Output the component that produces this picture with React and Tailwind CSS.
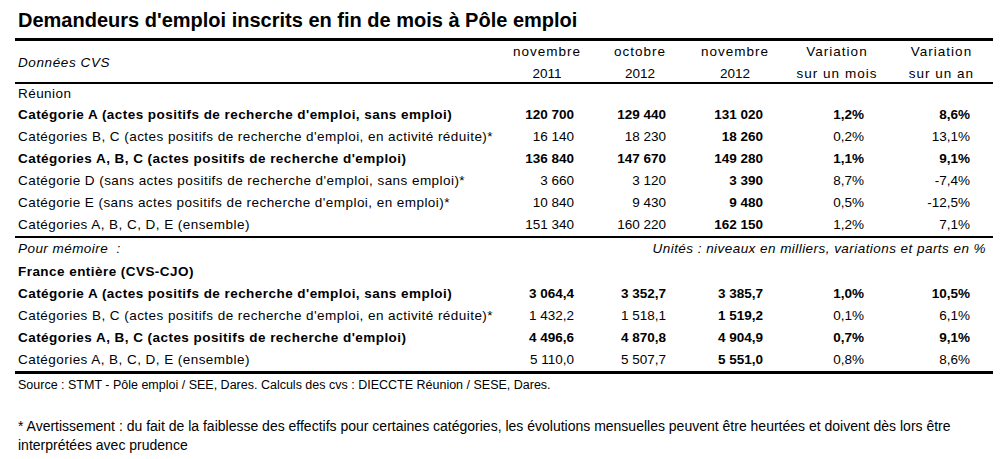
import React from "react";

const reunion = [
  { label: "Catégorie A (actes positifs de recherche d'emploi, sans emploi)", v: ["120 700", "129 440", "131 020", "1,2%", "8,6%"], bold: true },
  { label: "Catégories B, C (actes positifs de recherche d'emploi, en activité réduite)*", v: ["16 140", "18 230", "18 260", "0,2%", "13,1%"] },
  { label: "Catégories A, B, C (actes positifs de recherche d'emploi)", v: ["136 840", "147 670", "149 280", "1,1%", "9,1%"], bold: true },
  { label: "Catégorie D (sans actes positifs de recherche d'emploi, sans emploi)*", v: ["3 660", "3 120", "3 390", "8,7%", "-7,4%"] },
  { label: "Catégorie E (sans actes positifs de recherche d'emploi, en emploi)*", v: ["10 840", "9 430", "9 480", "0,5%", "-12,5%"] },
  { label: "Catégories A, B, C, D, E (ensemble)", v: ["151 340", "160 220", "162 150", "1,2%", "7,1%"] },
];

const france = [
  { label: "Catégorie A (actes positifs de recherche d'emploi, sans emploi)", v: ["3 064,4", "3 352,7", "3 385,7", "1,0%", "10,5%"], bold: true },
  { label: "Catégories B, C (actes positifs de recherche d'emploi, en activité réduite)*", v: ["1 432,2", "1 518,1", "1 519,2", "0,1%", "6,1%"] },
  { label: "Catégories A, B, C (actes positifs de recherche d'emploi)", v: ["4 496,6", "4 870,8", "4 904,9", "0,7%", "9,1%"], bold: true },
  { label: "Catégories A, B, C, D, E (ensemble)", v: ["5 110,0", "5 507,7", "5 551,0", "0,8%", "8,6%"] },
];

const grid = "grid grid-cols-[485px_94px_92px_98px_106px_103px]";
const pads = ["pr-[20px]", "pr-[20px]", "pr-[21px]", "pr-[26px]", "pr-[23px]"];

const Row = ({ row }) => (
  <div className={`${grid} h-[22px] items-center`}>
    <div className={`pl-[3px] whitespace-nowrap tracking-[0.45px] ${row.bold ? "font-bold" : ""}`}>{row.label}</div>
    {row.v.map((x, i) => (
      <div key={i} className={`text-right ${pads[i]} ${row.bold || i === 2 ? "font-bold" : ""}`}>
        {x}
      </div>
    ))}
  </div>
);

const Head = ({ top, bottom }) => (
  <div className="text-center leading-[22px]">
    <div className="tracking-[1px]">{top}</div>
    <div className={/\d/.test(bottom) ? "" : "tracking-[1px]"}>{bottom}</div>
  </div>
);

export default function App() {
  return (
    <div className="w-[1000px] h-[459px] bg-white text-black font-['Liberation_Sans',Arial,sans-serif] overflow-hidden">
      <div className="ml-[15px] w-[978px]">
        <div className="h-[38px] flex items-center pl-[3px] pt-[2px] text-[20px] font-bold">
          Demandeurs d'emploi inscrits en fin de mois à Pôle emploi
        </div>
        <div className="border-t-[3px] border-black" />
        <div className={`${grid} h-[43px] text-[13.5px] border-b-2 border-black`}>
          <div className="pl-[3px] italic flex items-center tracking-[0.6px]">Données CVS</div>
          <Head top="novembre" bottom="2011" />
          <Head top="octobre" bottom="2012" />
          <Head top="novembre" bottom="2012" />
          <Head top="Variation" bottom="sur un mois" />
          <Head top="Variation" bottom="sur un an" />
        </div>
        <div className="text-[13.5px] border-b-2 border-black">
          <div className="h-[20px] flex items-center pl-[3px] tracking-[0.45px]">Réunion</div>
          {reunion.map((r, i) => (
            <Row key={i} row={r} />
          ))}
        </div>
        <div className="text-[13.5px] border-b-[3px] border-black">
          <div className="h-[23px] flex items-center justify-between pl-[3px] pr-[7px] italic tracking-[0.45px]">
            <span>Pour mémoire&nbsp; :</span>
            <span>Unités : niveaux en milliers, variations et parts en %</span>
          </div>
          <div className="h-[22px] flex items-center pl-[3px] font-bold tracking-[0.45px]">France entière (CVS-CJO)</div>
          {france.map((r, i) => (
            <Row key={i} row={r} />
          ))}
        </div>
        <div className="h-[22px] flex items-center pl-[3px] text-[12.5px]">
          Source : STMT - Pôle emploi / SEE, Dares. Calculs des cvs : DIECCTE Réunion / SESE, Dares.
        </div>
        <div className="mt-[21px] pl-[3px] text-[14px] leading-[19px]">
          <div className="whitespace-nowrap">
            * Avertissement : du fait de la faiblesse des effectifs pour certaines catégories, les évolutions mensuelles peuvent être heurtées et doivent dès lors être
          </div>
          <div>interprétées avec prudence</div>
        </div>
      </div>
    </div>
  );
}
